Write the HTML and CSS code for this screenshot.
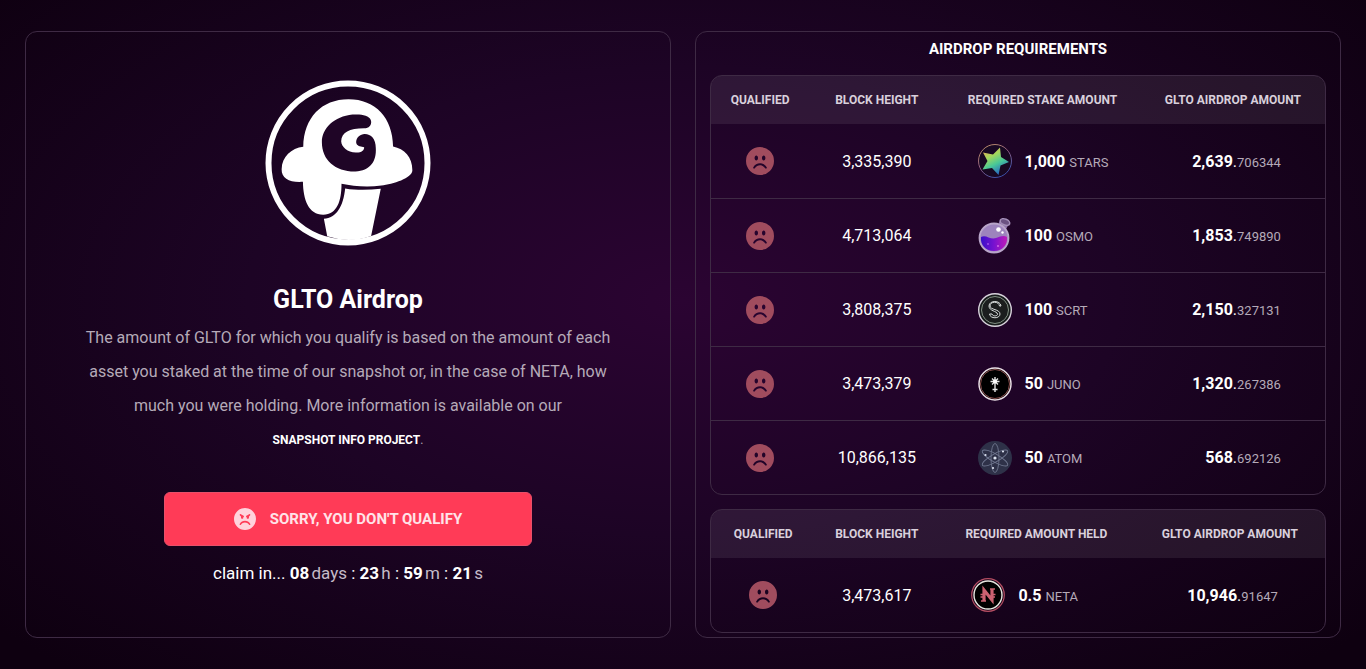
FILE: index.html
```html
<!DOCTYPE html>
<html lang="en">
<head>
    <meta charset="UTF-8">
    <meta name="viewport" content="width=device-width, initial-scale=1">
    <title>GLTO Airdrop</title>
    <link rel="stylesheet" href="styles.css">
</head>
<body>
<svg class="sprites" aria-hidden="true">
    <symbol id="sad" viewBox="0 0 28 28">
        <path fill-rule="evenodd" d="M14 0a14 14 0 1 0 0 28a14 14 0 0 0 0-28zM10.300 8.500c1 0 1.700 1.100 1.700 2.500s-.7 2.500-1.700 2.500s-1.700-1.100-1.700-2.500s.7-2.500 1.700-2.500zM17.700 8.500c1 0 1.700 1.100 1.700 2.500s-.7 2.500-1.700 2.500s-1.700-1.100-1.700-2.500s.7-2.500 1.700-2.500zM7.200 20.500c3-5.600 10.600-5.600 13.600 0c.4 1-.9 1.700-1.600.8c-2.600-4-7.800-4-10.400 0c-.7.900-2 .2-1.600-.8z"/>
    </symbol>
    <symbol id="angry" viewBox="0 0 28 28">
        <path fill-rule="evenodd" d="M14 0a14 14 0 1 0 0 28a14 14 0 0 0 0-28zM8.300 7.600l3.900 2.200c1 .5.600 1.500-.2 1.500c-.1 1.600-.6 2.400-1.500 2.400c-1.300 0-1.800-1.200-1.600-3l-1-.9c-1.200-.6-.7-2.600.4-2.200zM19.700 7.600l-3.900 2.200c-1 .5-.6 1.500.2 1.500c.1 1.600.6 2.400 1.500 2.400c1.300 0 1.800-1.200 1.600-3l1-.9c1.200-.6.7-2.600-.4-2.200zM7.200 20.500c3-5.600 10.600-5.600 13.600 0c.4 1-.9 1.700-1.600.8c-2.600-4-7.800-4-10.400 0c-.7.900-2 .2-1.600-.8z"/>
    </symbol>
</svg>

<main class="root-container">
    <section class="panel claim-panel">
        <svg class="logo" viewBox="28 33 499 497" role="img" aria-label="Gelotto">
            <circle class="logo-ring" cx="277.500" cy="281.500" r="239"/>
            <path class="logo-cream" d="M143 233C145 145 198 90 279 90C361 90 412 147 413 232C447 239 471 264 471 303C471 327 412 345 378 349C336 355 292 351 258 344C258 395 245 437 203 437C159 437 143 393 142 338C103 341 77 328 78 300C79 263 107 237 143 233Z"/>
            <path class="logo-cream" d="M205 449C243 446 263 413 269 358C303 364 340 363 376 359L347 501Q280 524 215 502Z"/>
            <path class="logo-swirl" d="M331 177C344 174 350 164 346 152C340 137 315 134 291 136C236 142 199 177 199 219C199 273 240 308 300 307C343 306 364 277 361 236C361 208 346 193 326 194C309 196 299 211 303 224C307 232 318 233 326 234C327 243 317 251 301 250C276 249 258 234 257 216C258 189 283 176 331 177Z"/>
        </svg>
        <h1>GLTO Airdrop</h1>
        <p class="description">
            The amount of GLTO for which you qualify is based on the amount of each asset you staked at the time of our snapshot or, in the case of NETA, how much you were holding. More information is available on our
            <span class="info"><a href="#">SNAPSHOT INFO PROJECT</a>.</span>
        </p>
        <button class="claim-button" type="button">
            <svg class="button-face" aria-hidden="true"><use href="#angry"/></svg>
            SORRY, YOU DON'T QUALIFY
        </button>
        <div class="countdown">
            claim in... <b>08</b> <span>days</span> : <b>23</b> <span>h</span> : <b>59</b> <span>m</span> : <b>21</b> <span>s</span>
        </div>
    </section>

    <section class="panel requirements-panel">
        <h2>AIRDROP REQUIREMENTS</h2>
        <div class="table-box">
            <table class="stake-table">
                <thead>
                <tr>
                    <th>QUALIFIED</th>
                    <th>BLOCK HEIGHT</th>
                    <th>REQUIRED STAKE AMOUNT</th>
                    <th>GLTO AIRDROP AMOUNT</th>
                </tr>
                </thead>
                <tbody>
                <tr>
                    <td><svg class="face" role="img" aria-label="No"><use href="#sad"/></svg></td>
                    <td>3,335,390</td>
                    <td>
                        <div class="asset">
                            <svg viewBox="0 0 34 34">
                                <defs>
                                    <linearGradient id="rainbow" x1="0.200" y1="0" x2="0.700" y2="1">
                                        <stop offset="0" stop-color="#e8a65a"/>
                                        <stop offset="0.300" stop-color="#a4d85c"/>
                                        <stop offset="0.600" stop-color="#48c898"/>
                                        <stop offset="1" stop-color="#2456c8"/>
                                    </linearGradient>
                                    <linearGradient id="ring" x1="0" y1="0" x2="0.600" y2="1">
                                        <stop offset="0" stop-color="#c59a62"/>
                                        <stop offset="0.500" stop-color="#94607e"/>
                                        <stop offset="1" stop-color="#3c50a8"/>
                                    </linearGradient>
                                </defs>
                                <circle cx="17" cy="17" r="16.500" fill="#180822" stroke="url(#ring)"/>
                                <path d="M22 3.500L23 13L31 18L22.500 21.500L20.500 31L14 24L4.500 25.500L9.500 17L5 8.500L15 10.500Z" fill="url(#rainbow)"/>
                            </svg>
                            <span><b>1,000</b> <small>STARS</small></span>
                        </div>
                    </td>
                    <td><div class="amount"><b>2,639</b>.<small>706344</small></div></td>
                </tr>
                <tr>
                    <td><svg class="face" role="img" aria-label="No"><use href="#sad"/></svg></td>
                    <td>4,713,064</td>
                    <td>
                        <div class="asset">
                            <svg viewBox="0 0 34 34">
                                <defs>
                                    <linearGradient id="potion">
                                        <stop offset="0" stop-color="#3810c8"/>
                                        <stop offset="0.500" stop-color="#7812d0"/>
                                        <stop offset="1" stop-color="#c01cb8"/>
                                    </linearGradient>
                                </defs>
                                <path d="M20 6L22 1L31 5L28 10Z" fill="#9277ae"/>
                                <ellipse cx="27" cy="3" rx="5" ry="3" transform="rotate(22 27 3)" fill="#6b5282" stroke="#a48fb8" stroke-width="1.500"/>
                                <circle cx="16" cy="19" r="14.500" fill="#9d83bd" stroke="#b8a5c9" stroke-width="1.800"/>
                                <path d="M3 18C8 15 12 21 18 19C23 17 26 16 29 18C30 26 24 32 16 32C8 32 2 26 3 18Z" fill="url(#potion)"/>
                                <circle cx="20.500" cy="10.500" r="2.300" fill="#fff"/>
                                <circle cx="24.500" cy="13.500" r="1.200" fill="#fff"/>
                                <circle cx="10" cy="25" r="1" fill="#9c52e8"/>
                                <circle cx="20" cy="27" r="1" fill="#cf69e7"/>
                            </svg>
                            <span><b>100</b> <small>OSMO</small></span>
                        </div>
                    </td>
                    <td><div class="amount"><b>1,853</b>.<small>749890</small></div></td>
                </tr>
                <tr>
                    <td><svg class="face" role="img" aria-label="No"><use href="#sad"/></svg></td>
                    <td>3,808,375</td>
                    <td>
                        <div class="asset">
                            <svg viewBox="0 0 34 34">
                                <circle cx="17" cy="17" r="16.300" fill="#171b1b" stroke="#d8d3dc" stroke-width="1.400"/>
                                <circle cx="17" cy="17" r="13.500" fill="#1b1d1e" stroke="#829184"/>
                                <path d="M21.500 13C21 8 12 8 12 13C12 17 22 16 22 21C22 26 12 26 11.500 21H14C15 24 20 23 19.500 21C19 18 11 18 11 13C11 7 22.500 7 23 13Z" fill="none" stroke="#d9dddd"/>
                            </svg>
                            <span><b>100</b> <small>SCRT</small></span>
                        </div>
                    </td>
                    <td><div class="amount"><b>2,150</b>.<small>327131</small></div></td>
                </tr>
                <tr>
                    <td><svg class="face" role="img" aria-label="No"><use href="#sad"/></svg></td>
                    <td>3,473,379</td>
                    <td>
                        <div class="asset">
                            <svg viewBox="0 0 34 34">
                                <circle cx="17" cy="17" r="16" fill="#000" stroke="#eadfe5" stroke-width="1.500"/>
                                <circle cx="17" cy="17" r="14.500" fill="#000" stroke="#8c504f"/>
                                <path d="M17 10V25M12.500 14.500H21.500M14 11.500L20 17.500M20 11.500L14 17.500M14.500 22.500H19.500" fill="none" stroke="#e4e5e5" stroke-width="1.400"/>
                                <circle cx="17" cy="14.500" r="2" fill="#fff"/>
                            </svg>
                            <span><b>50</b> <small>JUNO</small></span>
                        </div>
                    </td>
                    <td><div class="amount"><b>1,320</b>.<small>267386</small></div></td>
                </tr>
                <tr>
                    <td><svg class="face" role="img" aria-label="No"><use href="#sad"/></svg></td>
                    <td>10,866,135</td>
                    <td>
                        <div class="asset">
                            <svg viewBox="0 0 34 34">
                                <circle cx="17" cy="17" r="17" fill="#2e3148"/>
                                <g fill="none" stroke="#707790" stroke-width="0.900">
                                    <ellipse cx="17" cy="17" rx="4" ry="14.500"/>
                                    <ellipse cx="17" cy="17" rx="4" ry="14.500" transform="rotate(60 17 17)"/>
                                    <ellipse cx="17" cy="17" rx="4" ry="14.500" transform="rotate(120 17 17)"/>
                                </g>
                                <g fill="#dbe1ef">
                                    <circle cx="17" cy="17" r="1.600"/>
                                    <circle cx="7.500" cy="14" r="1.100"/>
                                    <circle cx="25" cy="10.500" r="1.100"/>
                                    <circle cx="15" cy="27" r="1.100"/>
                                </g>
                            </svg>
                            <span><b>50</b> <small>ATOM</small></span>
                        </div>
                    </td>
                    <td><div class="amount"><b>568</b>.<small>692126</small></div></td>
                </tr>
                </tbody>
            </table>
        </div>
        <div class="table-box">
            <table class="held-table">
                <thead>
                <tr>
                    <th>QUALIFIED</th>
                    <th>BLOCK HEIGHT</th>
                    <th>REQUIRED AMOUNT HELD</th>
                    <th>GLTO AIRDROP AMOUNT</th>
                </tr>
                </thead>
                <tbody>
                <tr>
                    <td><svg class="face" role="img" aria-label="No"><use href="#sad"/></svg></td>
                    <td>3,473,617</td>
                    <td>
                        <div class="asset">
                            <svg viewBox="0 0 34 34">
                                <circle cx="17" cy="17" r="16.300" fill="#180418" stroke="#b34d62" stroke-width="1.200"/>
                                <circle cx="17" cy="17" r="14" fill="#000" stroke="#e6e6df" stroke-width="1.400"/>
                                <path d="M13 23V12L21 22V11" fill="none" stroke="#cb6271" stroke-width="3.200"/>
                                <path d="M10 23H15M19 11H24M9.500 16.500H14M20 16.500H24.500M9.500 19H14M20 19H24" fill="none" stroke="#cb6271" stroke-width="1.500"/>
                            </svg>
                            <span><b>0.5</b> <small>NETA</small></span>
                        </div>
                    </td>
                    <td><div class="amount"><b>10,946</b>.<small>91647</small></div></td>
                </tr>
                </tbody>
            </table>
        </div>
    </section>
</main>
</body>
</html>
```
FILE: styles.css
```css
* {
    box-sizing: border-box;
}

body {
    min-height: 100vh;
    margin: 0;
    background: radial-gradient(ellipse at 50% 45%, #2b0432 0%, #1d0425 45%, #0e0010 95%);
    color: #fff;
    font-family: Roboto, "Liberation Sans", sans-serif;
    font-size: 16px;
}

.sprites {
    display: none;
}

.root-container {
    display: grid;
    grid-template-columns: 1fr 1fr;
    gap: 24px;
    padding: 31px 25px;
}

.panel {
    border: 1px solid #3e2a44;
    border-radius: 12px;
}

.claim-panel {
    display: flex;
    flex-direction: column;
    align-items: center;
    justify-content: center;
}

.logo {
    width: 166px;
    height: 166px;
    margin-bottom: 36px;
}

.logo-ring {
    fill: none;
    stroke: #fff;
    stroke-width: 18;
}

.logo-cream {
    fill: #fff;
}

.logo-swirl {
    fill: #1f0526;
}

h1 {
    margin: 0;
    font-size: 25px;
    line-height: 36px;
}

.description {
    width: 82%;
    margin: 3px 0 0;
    color: #b5aab8;
    line-height: 34px;
    text-align: center;
}

.info {
    display: block;
    font-size: 12px;
}

.info a {
    color: #fff;
    font-weight: bold;
    text-decoration: none;
}

.claim-button {
    display: flex;
    align-items: center;
    justify-content: center;
    gap: 14px;
    width: 57%;
    height: 54px;
    margin: 35px 0 10px;
    border: 1px solid #e8506a;
    border-radius: 6px;
    background: #ff3b57;
    color: #ffe3e8;
    font: bold 15px Roboto, "Liberation Sans", sans-serif;
    cursor: pointer;
}

.button-face {
    width: 22px;
    height: 22px;
    fill: #ffd3dc;
}

.countdown {
    font-size: 17px;
    line-height: 34px;
}

.countdown span {
    margin-left: -2px;
    color: #c5bbc8;
}

.requirements-panel {
    padding: 0 14px 4px;
}

h2 {
    margin: 0;
    font-size: 15px;
    line-height: 34px;
    text-align: center;
}

.table-box {
    overflow: hidden;
    border: 1px solid #3e2a44;
    border-radius: 12px;
}

h2 + .table-box {
    margin: 9px 0 14px;
}

table {
    width: 100%;
    table-layout: fixed;
    border-spacing: 0;
    text-align: center;
}

th {
    height: 48px;
    padding: 0;
    background: rgba(255, 255, 255, 0.08);
    color: #d9d0dc;
    font-size: 12px;
}

td {
    height: 74px;
    padding: 0;
}

tr + tr td {
    border-top: 1px solid #3e2a44;
}

.stake-table th:nth-child(1) {
    width: 16%;
}

.stake-table th:nth-child(2) {
    width: 22%;
}

.stake-table th:nth-child(3),
.held-table th:nth-child(3) {
    width: 32%;
}

.held-table th:nth-child(1) {
    width: 17%;
}

.held-table th:nth-child(2) {
    width: 20%;
}

.face {
    display: block;
    width: 28px;
    height: 28px;
    margin: 0 auto;
    fill: #a04c5e;
}

.asset {
    display: flex;
    align-items: center;
    gap: 13px;
    width: 130px;
    margin: 0 auto;
    text-align: left;
    white-space: nowrap;
}

.asset svg {
    flex: none;
    width: 34px;
    height: 34px;
    overflow: visible;
}

.amount {
    width: 96px;
    margin: 0 auto;
    text-align: right;
}

small {
    color: #b5aab8;
    font-size: 13px;
}
```
